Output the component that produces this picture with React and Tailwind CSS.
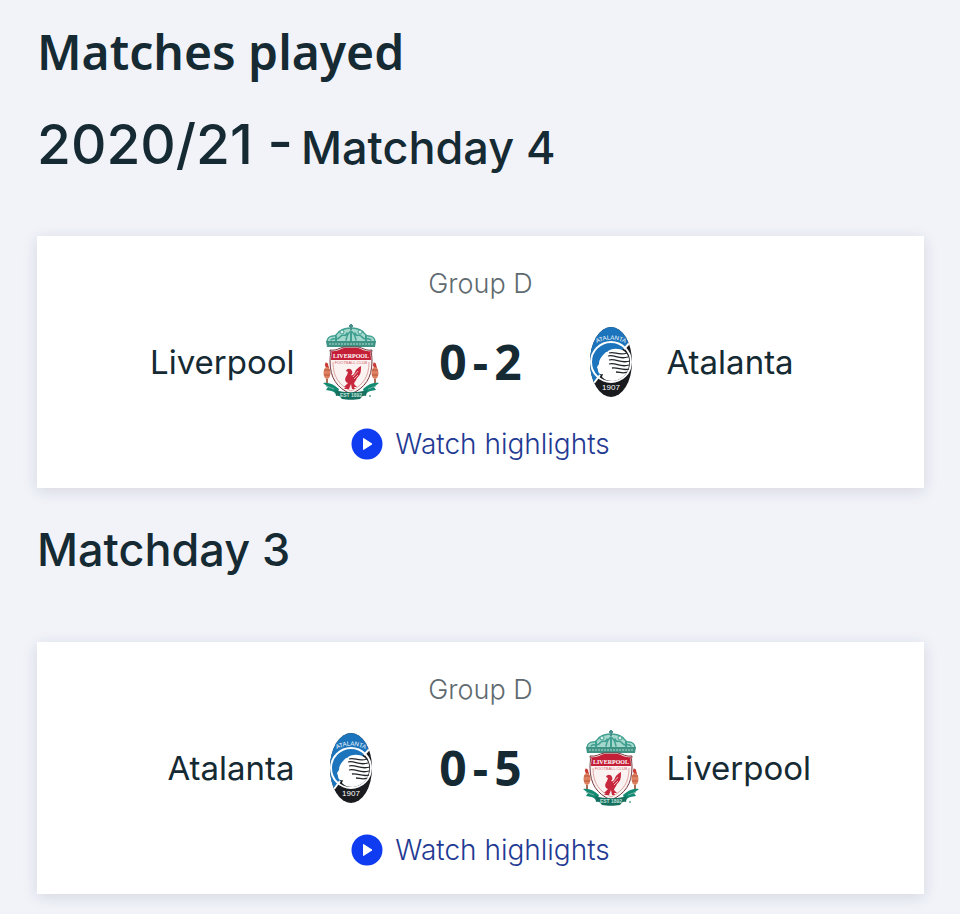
import React from "react";

const matchdays = [
  {
    season: "2020/21",
    title: "Matchday 4",
    matches: [
      { group: "Group D", home: "Liverpool", away: "Atalanta", homeGoals: 0, awayGoals: 2 },
    ],
  },
  {
    title: "Matchday 3",
    matches: [
      { group: "Group D", home: "Atalanta", away: "Liverpool", homeGoals: 0, awayGoals: 5 },
    ],
  },
];

const LiverpoolCrest = () => (
  <svg viewBox="0 0 56 76" className="h-[76px] w-14" aria-hidden="true">
    {/* Gates */}
    <path d="M4 18c0-4 3-6 6-6 3 1 5-4 7-5 3-2 6-3 11-3s8 1 11 3c2 1 4 6 7 5 3 0 6 2 6 6z" fill="#a5d8cc" />
    <g fill="none" stroke="#3f9f90" strokeLinecap="round">
      <path d="M4 18c0-4 3-6 6-6 3 1 5-4 7-5 3-2 6-3 11-3s8 1 11 3c2 1 4 6 7 5 3 0 6 2 6 6" strokeWidth="1.5" />
      <path d="M8 16c3-3 6 1 9-3s6 1 7-4M48 16c-3-3-6 1-9-3s-6 1-7-4M23 16c1-5 2-7 5-9 3 2 4 4 5 9" strokeWidth="1.5" />
      <path d="M28 8v9M13 12v5M43 12v5" strokeWidth="2" />
    </g>
    <path d="M28 0v6M26 2h4" stroke="#4a8f8c" strokeWidth="2" />
    <circle cx="19" cy="8" r="2" fill="#d5eee8" stroke="#3f9f90" />
    <circle cx="37" cy="8" r="2" fill="#d5eee8" stroke="#3f9f90" />
    <path d="M3 17h50l-1 6H4z" fill="#3f9385" />
    <path d="M6 20h44" stroke="#8fc3b6" strokeWidth="1.5" strokeDasharray="2 1" />
    {/* Flames */}
    {[4, 52].map((x) => (
      <g key={x}>
        <path d={`M${x} 39c-2 3 2 3 0 7`} fill="none" stroke="#c93a35" strokeWidth="3" />
        <ellipse cx={x} cy="49" rx="3.5" ry="6" fill="#dc8060" />
        <path d={`M${x - 3} 46h6M${x - 3} 51h6`} stroke="#b85640" />
        <path d={`M${x} 55v5`} stroke="#a66d55" strokeWidth="2" />
      </g>
    ))}
    {/* Ribbons */}
    <path d="M0 59c6-1 10 1 16 6l-2 6c-4-5-7-4-11-5l2-3zM56 59c-6-1-10 1-16 6l2 6c4-5 7-4 11-5l-2-3z" fill="#138a72" />
    <path d="M3 62l8 3M53 62l-8 3" stroke="#72b5a5" />
    {/* Shield */}
    <path d="M7 26c6 1 9-2 14-3h14c5 1 8 4 14 3-1 4 0 6 0 11 0 17-7 27-21 33C14 64 7 54 7 37c0-5 1-7 0-11z" fill="#fbf3f1" stroke="#75383f" />
    <path d="M8 27c6 1 9-2 13-3h14c4 1 7 4 13 3-1 3 0 5 0 9H8c0-4 1-6 0-9z" fill="#c51f38" />
    <path d="M10 38c0 15 6 23 18 29 12-6 18-14 18-29" fill="none" stroke="#dda6a4" />
    <text x="28" y="34" textAnchor="middle" fill="#fff" className="font-['Liberation_Serif'] text-[6px] font-bold">LIVERPOOL</text>
    <text x="28" y="40" textAnchor="middle" fill="#d4636b" className="font-['Liberation_Sans'] text-[4px]">FOOTBALL CLUB</text>
    {/* Liver bird */}
    <path d="M23 47c1-3 5-3 6 0 1 2 0 3-1 4 2 1 3-1 4-3 1-3 3-4 6-6 0 5 0 9-4 12-1 3-3 4-3 6l3 3h-3l1 2h-3l-1-5-2 5h-5l2-2h-2l4-4c-3-1-4-4-1-8l1-3z" fill="#c8283e" />
    <path d="M30 53l5-6M31 55l4-4" stroke="#f1b3b3" />
    {/* Scroll */}
    <path d="M12 66c10 3 22 3 32 0l-1 6c-3-1-4 0-6 3-5 1-13 1-18 0-2-3-3-4-6-3z" fill="#16705f" />
    <text x="28" y="73" textAnchor="middle" fill="#c1e2d8" className="font-['Liberation_Sans'] text-[5px] font-bold">EST 1892</text>
    <circle cx="47" cy="72" r="1" fill="#61a595" />
  </svg>
);

const AtalantaCrest = () => (
  <svg viewBox="0 0 42 72" className="h-[72px] w-[42px]" aria-hidden="true">
    <defs>
      <clipPath id="oval">
        <ellipse cx="21" cy="36" rx="21" ry="35" />
      </clipPath>
      <path id="nameArc" d="M2 20Q21 7 40 20" />
    </defs>
    <g clipPath="url(#oval)">
      <path d="M0 0h42v72H0z" fill="#191b1f" />
      <path d="M0 0h42v13L2 58H0z" fill="#1c75bc" />
      <path d="M42 14L34 23M10 49l-6 8" stroke="#fff" strokeWidth="2" />
      <circle cx="21" cy="36" r="20" fill="none" stroke="#fff" strokeWidth="2" />
      {/* Head of the goddess */}
      <path d="M17 26c4-4 12-4 17-1 4 3 6 8 5 14-1 9-7 15-16 16-5 0-8-1-11-4l1-3c-3 1-5-1-5-4l-1-3 2-3c0-5 3-8 7-12z" fill="#fff" />
      <g fill="none" stroke="#22252a" strokeWidth="1.3">
        <path d="M19 27c6-2 9 3 18 0M18 30c7-2 10 4 20 1M19 34c7-2 11 4 21 1M19 38c7-2 11 4 20 1M22 42c6-1 10 3 17 1M26 46c4 0 7 2 11 0" />
      </g>
    </g>
    <text fill="#fff" className="font-['Liberation_Sans'] text-[6px]">
      <textPath href="#nameArc" startOffset="50%" textAnchor="middle">ATALANTA</textPath>
    </text>
    <text x="21" y="64" textAnchor="middle" fill="#fff" className="font-['Liberation_Sans'] text-[8px]">1907</text>
  </svg>
);

const crests = {
  Liverpool: LiverpoolCrest,
  Atalanta: AtalantaCrest,
};

const Crest = ({ team }) => {
  const Logo = crests[team];
  return (
    <div className="flex w-20 shrink-0 justify-center">
      <Logo />
    </div>
  );
};

const MatchCard = ({ match }) => (
  <article className="bg-white px-6 pt-7 pb-6 shadow-[0_3px_14px_rgba(40,30,60,0.13)]">
    <p className="text-center text-[27px] leading-10 font-light text-[#5f6b70]">{match.group}</p>

    <div className="mt-5 flex h-[76px] items-center text-[33px] leading-10 text-[#152a33]">
      <span className="flex-1 pr-4 text-right">{match.home}</span>
      <Crest team={match.home} />
      <strong className="flex w-[180px] shrink-0 justify-center gap-1.5 font-['Noto_Sans',sans-serif] text-[48px] leading-[72px] font-bold">
        <span>{match.homeGoals}</span>
        <span>-</span>
        <span>{match.awayGoals}</span>
      </strong>
      <Crest team={match.away} />
      <span className="flex-1 pl-4">{match.away}</span>
    </div>

    <div className="mt-6 flex justify-center">
      <a href="#highlights" className="flex items-center gap-3 text-[28px] leading-10 font-light text-[#1f3a93]">
        <svg viewBox="0 0 32 32" className="size-8" aria-hidden="true">
          <circle cx="16" cy="16" r="15.5" fill="#0f3cf0" />
          <path d="M12.500 10.500v11l8.500-5.500z" fill="#fff" stroke="#fff" strokeLinejoin="round" />
        </svg>
        Watch highlights
      </a>
    </div>
  </article>
);

const App = () => {
  return (
    <main className="min-h-screen bg-[#f1f3f9] pt-5 pr-9 pl-[37px] font-['Inter',sans-serif] text-[#152a33]">
      <h1 className="mb-6 font-['Noto_Sans',sans-serif] text-[48px] leading-[64px] font-semibold">Matches played</h1>

      {matchdays.map((day) => (
        <section key={day.title} className="pb-[26px]">
          <h2 className="flex h-32 items-baseline gap-2 text-[45px] leading-[72px] font-medium">
            {day.season && <span className="text-[55px]">{day.season} -</span>}
            {day.title}
          </h2>
          {day.matches.map((match) => (
            <MatchCard key={match.home} match={match} />
          ))}
        </section>
      ))}
    </main>
  );
};

export default App;
